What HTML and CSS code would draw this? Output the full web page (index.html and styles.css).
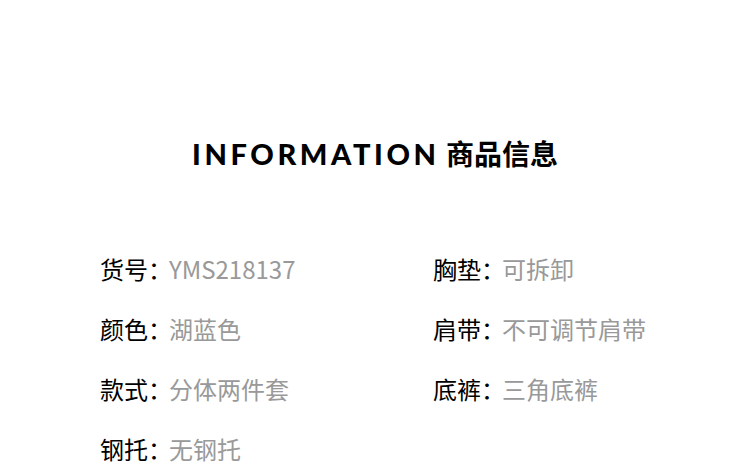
FILE: index.html
```html
<!DOCTYPE html>
<html lang="zh-CN">
<head>
  <meta charset="UTF-8" />
  <meta name="viewport" content="width=device-width, initial-scale=1.0"/>
  <title>商品信息</title>
  <link rel="stylesheet" href="styles.css">
</head>
<body>
  <div class="info">
    <h2 class="info-title"><span class="en">INFORMATION</span> 商品信息</h2>

    <div class="info-list">
      <div class="item"><span class="label">货号：</span><span class="value">YMS218137</span></div>
      <div class="item"><span class="label">胸垫：</span><span class="value">可拆卸</span></div>
      <div class="item"><span class="label">颜色：</span><span class="value">湖蓝色</span></div>
      <div class="item"><span class="label">肩带：</span><span class="value">不可调节肩带</span></div>
      <div class="item"><span class="label">款式：</span><span class="value">分体两件套</span></div>
      <div class="item"><span class="label">底裤：</span><span class="value">三角底裤</span></div>
      <div class="item"><span class="label">钢托：</span><span class="value">无钢托</span></div>
    </div>
  </div>
</body>
</html>
```

FILE: styles.css
```css
body {
  margin: 0;
  background: #fff;
  font-family: "Noto Sans CJK SC", "Noto Sans", sans-serif;
}

.info {
  padding-top: 133px;
}

.info-title {
  margin: 0;
  text-align: center;
  font-size: 28px;
  line-height: 40px;
  font-weight: 700;
  color: #000;
}

.info-title .en {
  font-family: "Lato", "Noto Sans CJK SC", sans-serif;
  font-size: 29px;
  font-weight: 900;
  letter-spacing: 3.6px;
}

.info-list {
  margin-top: 65px;
  padding-left: 100px;
  display: grid;
  grid-template-columns: 333px 1fr;
}

.item {
  font-size: 24px;
  line-height: 60px;
  white-space: nowrap;
}

.label {
  color: #000;
}

.value {
  margin-left: -3px;
  color: #999;
}
```
